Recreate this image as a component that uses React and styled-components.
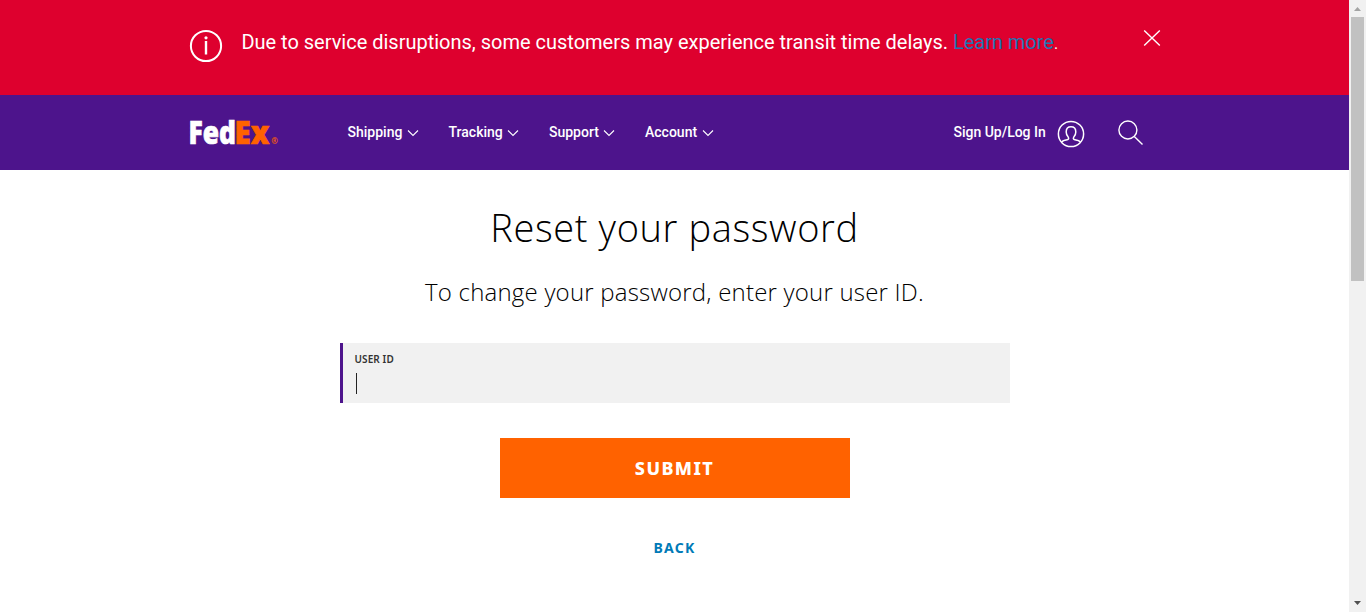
import React from "react";
import styled, { createGlobalStyle } from "styled-components";

const GlobalStyle = createGlobalStyle`
  * { box-sizing: border-box; }
  html, body { margin: 0; padding: 0; overflow: hidden; }
  body { background: #fff; font-family: Roboto, "Liberation Sans", sans-serif; }
`;

const Window = styled.div`
  display: flex;
  width: 1366px;
  height: 612px;
`;

const Page = styled.div`
  flex: 1;
  min-width: 0;
`;

const Alert = styled.section`
  display: flex;
  align-items: flex-start;
  height: 95px;
  padding: 29px 187px 0 189px;
  background: #de002e;
  color: #fff;
`;

const AlertText = styled.p`
  margin: 0 auto 0 18.4px;
  font-size: 20px;
  line-height: 26px;
  letter-spacing: -0.005px;
  white-space: nowrap;
`;

const AlertLink = styled.a`
  color: #2176b4;
  letter-spacing: -0.05px;
`;

const LinkStop = styled.span`
  font-weight: 300;
`;

const Bar = styled.header`
  display: flex;
  align-items: center;
  height: 75px;
  padding: 0 206px 0 190px;
  background: #4d148c;
  color: #fff;
`;

const Logo = styled.svg`
  display: block;
  width: 90px;
  height: 30px;
  margin-right: 67.5px;
  overflow: visible;
  font-family: "Open Sans", sans-serif;
  font-weight: 800;
`;

const Nav = styled.nav`
  display: flex;
  gap: 29.6px;
  margin-right: auto;
`;

const NavItem = styled.a`
  display: flex;
  align-items: center;
  gap: 4.6px;
  padding-bottom: 1px;
  font-size: 14px;
  font-weight: 500;
  line-height: 20px;
  letter-spacing: ${(p) => p.$spacing || "0"};
  white-space: nowrap;

  svg { margin-top: 2px; }
`;

const Account = styled.div`
  display: flex;
  align-items: center;
  gap: 11.6px;
  margin-right: 31.7px;
  padding-top: 2px;

  ${NavItem} { padding-bottom: 3px; }
`;

const Content = styled.main`
  display: flex;
  flex-direction: column;
  align-items: center;
  padding-top: 29px;
  font-family: "Noto Sans", "Open Sans", sans-serif;
  color: #000;
`;

const Title = styled.h1`
  margin: 0;
  font-family: "Open Sans", sans-serif;
  font-size: 38px;
  font-weight: 300;
  line-height: 56px;
  letter-spacing: 0.62px;
  white-space: nowrap;
`;

const Subtitle = styled.p`
  margin: 19px 0 0;
  font-family: "Open Sans", sans-serif;
  font-size: 24px;
  font-weight: 300;
  line-height: 35px;
  letter-spacing: 0.21px;
  white-space: nowrap;
`;

const Field = styled.label`
  display: flex;
  flex-direction: column;
  width: 670px;
  height: 60px;
  margin-top: 34px;
  padding: 9px 12px 0;
  border-left: 3px solid #4d148c;
  background: #f1f1f1;
`;

const FieldLabel = styled.span`
  font-size: 10px;
  font-weight: 600;
  line-height: 14px;
  letter-spacing: 0.1px;
  color: #333;
`;

const Caret = styled.span`
  width: 1px;
  height: 21px;
  margin: 7px 0 0 1px;
  background: #222;
`;

const Submit = styled.button`
  width: 350px;
  height: 60px;
  margin-top: 35px;
  padding: 0;
  border: 0;
  background: #ff6200;
  color: #fff;
  font: 800 18px/60px "Noto Sans", sans-serif;
  letter-spacing: 1.4px;
`;

const Back = styled.a`
  margin-top: 40px;
  color: #007ab7;
  font-size: 14px;
  font-weight: 700;
  line-height: 20px;
  letter-spacing: 1.3px;
`;

const Scrollbar = styled.aside`
  display: flex;
  flex-direction: column;
  align-items: center;
  width: 17px;
  background: #f1f1f1;
`;

const Thumb = styled.div`
  width: 13px;
  height: 264px;
  margin-bottom: auto;
  background: #c1c1c1;
`;

const Arrow = styled.svg`
  display: block;
  width: 17px;
  height: 17px;
`;

const Chevron = () => (
  <svg width="12" height="8" viewBox="0 0 12 8" fill="none" stroke="#fff" strokeWidth="1.1">
    <path d="M1 1.5 6 6.5 11 1.5" />
  </svg>
);

const menu = ["Shipping", "Tracking", "Support", "Account"];

export default function App() {
  return (
    <Window>
      <GlobalStyle />
      <Page>
        <Alert>
          <svg width="34" height="34" viewBox="0 0 34 34" fill="none" stroke="#fff">
            <circle cx="17" cy="17" r="15.1" strokeWidth="2" />
            <path d="M17 12v13.5" strokeWidth="2.4" />
            <circle cx="17" cy="8.8" r="1.6" fill="#fff" stroke="none" />
          </svg>
          <AlertText>
            Due to service disruptions, some customers may experience transit time delays.{" "}
            <AlertLink>Learn more</AlertLink>
            <LinkStop>.</LinkStop>
          </AlertText>
          <svg width="20" height="18" viewBox="0 0 20 18" fill="none" stroke="#fff" strokeWidth="1.4">
            <path d="M2.2 1.5 17.8 16.5M17.8 1.5 2.2 16.5" />
          </svg>
        </Alert>
        <Bar>
          <Logo viewBox="0 0 90 30">
            <text x="-1.4" y="26" fontSize="32" textLength="47.4" lengthAdjust="spacingAndGlyphs" fill="#fff" stroke="#fff" strokeWidth="0.7">Fed</text>
            <text x="44.6" y="26" fontSize="32" textLength="34.8" lengthAdjust="spacingAndGlyphs" fill="#ff6200" stroke="#ff6200" strokeWidth="0.7">Ex</text>
            <text x="81.3" y="26.4" fontSize="8" fontWeight="700" fill="#ff6200">®</text>
          </Logo>
          <Nav>
            {menu.map((name) => (
              <NavItem key={name}>
                {name}
                <Chevron />
              </NavItem>
            ))}
          </Nav>
          <Account>
            <NavItem $spacing="-0.02px">Sign Up/Log In</NavItem>
            <svg width="28" height="28" viewBox="0 0 28 28" fill="none" stroke="#fff" strokeWidth="1.5">
              <circle cx="14" cy="14" r="12.6" />
              <path d="M4.6 22.2c1.2-1.8 3-2.1 5.5-2.5 1.7-.3 1.9-1.6 1.1-2.6-1.4-1.6-2-3.3-2-5.2 0-3.3 1.7-5.2 4.8-5.2s4.8 1.9 4.8 5.2c0 1.9-.6 3.6-2 5.2-.8 1-.6 2.3 1.1 2.6 2.5.4 4.3.7 5.5 2.5" />
            </svg>
          </Account>
          <svg width="26" height="26" viewBox="0 0 26 26" fill="none" stroke="#fff" strokeWidth="1.4">
            <circle cx="10.9" cy="10" r="9" />
            <path d="M17.3 16.4 25.5 24.6" />
          </svg>
        </Bar>
        <Content>
          <Title>Reset your password</Title>
          <Subtitle>To change your password, enter your user ID.</Subtitle>
          <Field>
            <FieldLabel>USER ID</FieldLabel>
            <Caret />
          </Field>
          <Submit>SUBMIT</Submit>
          <Back>BACK</Back>
        </Content>
      </Page>
      <Scrollbar>
        <Arrow viewBox="0 0 17 17">
          <path d="M5 11 8.5 7 12 11Z" fill="#a3a3a3" />
        </Arrow>
        <Thumb />
        <Arrow viewBox="0 0 17 17">
          <path d="M5 6 12 6 8.5 10Z" fill="#505050" />
        </Arrow>
      </Scrollbar>
    </Window>
  );
}
